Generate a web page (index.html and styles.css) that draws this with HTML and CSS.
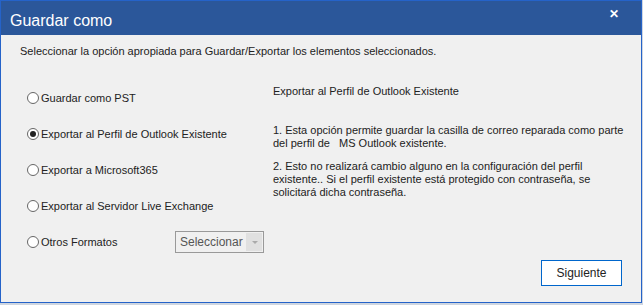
FILE: index.html
```html
<!DOCTYPE html>
<html lang="es">
<head>
    <meta charset="UTF-8">
    <title>Guardar como</title>
    <link rel="stylesheet" href="styles.css">
</head>
<body>
    <div class="window">
        <div class="title-bar">
            <span class="title">Guardar como</span>
            <span class="close">&#x2715;</span>
        </div>
        <div class="content">
            <p class="intro">Seleccionar la opción apropiada para Guardar/Exportar los elementos seleccionados.</p>
            <div class="columns">
                <div class="options">
                    <label class="option"><span class="radio"></span>Guardar como PST</label>
                    <label class="option"><span class="radio checked"></span>Exportar al Perfil de Outlook Existente</label>
                    <label class="option"><span class="radio"></span>Exportar a Microsoft365</label>
                    <label class="option"><span class="radio"></span>Exportar al Servidor Live Exchange</label>
                    <div class="option last">
                        <label class="option-label"><span class="radio"></span>Otros Formatos</label>
                        <div class="select">
                            <span class="select-text">Seleccionar</span>
                            <span class="select-arrow"></span>
                        </div>
                    </div>
                </div>
                <div class="details">
                    <h3>Exportar al Perfil de Outlook Existente</h3>
                    <p>1. Esta opción permite guardar la casilla de correo reparada como parte<br>del perfil de &nbsp;&nbsp;MS Outlook existente.</p>
                    <p>2. Esto no realizará cambio alguno en la configuración del perfil<br>existente.. Si el perfil existente está protegido con contraseña, se<br>solicitará dicha contraseña.</p>
                </div>
            </div>
            <div class="footer">
                <button class="next">Siguiente</button>
            </div>
        </div>
    </div>
</body>
</html>
```
FILE: styles.css
```css
body {
    margin: 0;
    background: #cfd6e0;
    font-family: "Liberation Sans", Arial, sans-serif;
    font-size: 11px;
    color: #222;
}
.window {
    width: 640px;
    height: 301px;
    border: 1px solid #2563c9;
    background: #f0f0f0;
    display: flex;
    flex-direction: column;
}
.title-bar {
    height: 34px;
    background: #2b579a;
    color: #fff;
    display: flex;
    justify-content: space-between;
    align-items: flex-start;
    padding: 0 22px 0 9px;
}
.title {
    font-size: 16px;
    margin-top: 11px;
}
.close {
    font-size: 12px;
    font-weight: bold;
    margin-top: 6px;
}
.content {
    flex: 1;
    display: flex;
    flex-direction: column;
}
.intro {
    margin: 9px 0 0 19px;
    line-height: 14px;
}
.columns {
    display: flex;
    margin-top: 32px;
}
.options {
    width: 246px;
    padding-left: 26px;
    display: flex;
    flex-direction: column;
    gap: 21px;
}
.option, .option-label {
    display: flex;
    align-items: center;
    height: 15px;
    white-space: nowrap;
}
.option-label {
    width: 148px;
}
.radio {
    width: 10px;
    height: 10px;
    border: 1px solid #666;
    border-radius: 50%;
    background: #fff;
    margin-right: 2px;
    position: relative;
}
.radio.checked::after {
    content: "";
    position: absolute;
    left: 2px;
    top: 2px;
    width: 6px;
    height: 6px;
    border-radius: 50%;
    background: #222;
}
.select {
    width: 85px;
    height: 18px;
    border: 1px solid #999;
    background: #f0f0f0;
    display: flex;
    align-items: center;
    padding: 1px;
    font-size: 12px;
}
.select-text {
    flex: 1;
    color: #555;
    padding-left: 3px;
}
.select-arrow {
    width: 16px;
    height: 18px;
    background: #e0e0e0;
    position: relative;
}
.select-arrow::after {
    content: "";
    position: absolute;
    left: 6px;
    top: 8px;
    border-left: 3px solid transparent;
    border-right: 3px solid transparent;
    border-top: 3px solid #aaa;
}
.details {
    flex: 1;
    margin-top: -5px;
    white-space: nowrap;
}
.details h3 {
    font-size: 11px;
    font-weight: normal;
    margin: 0 0 26px;
    line-height: 13px;
}
.details p {
    margin: 0 0 10px;
    line-height: 13px;
}
.footer {
    display: flex;
    justify-content: flex-end;
    padding-right: 19px;
    margin-top: auto;
    margin-bottom: 16px;
}
.next {
    width: 81px;
    height: 26px;
    background: #fff;
    border: 1px solid #0066cc;
    font-family: inherit;
    font-size: 12px;
    color: #222;
}
```
